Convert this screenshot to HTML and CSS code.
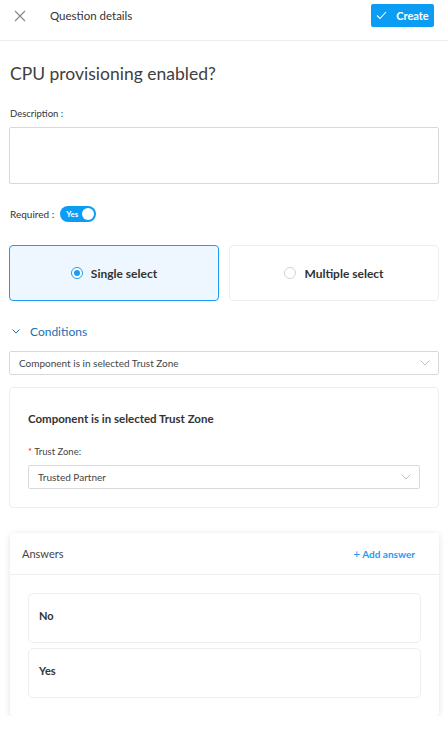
FILE: index.html
```html
<!DOCTYPE html>
<html>
<head>
<meta charset="utf-8">
<link rel="stylesheet" href="styles.css">
</head>
<body>
<header class="topbar">
  <svg class="close" width="12" height="12" viewBox="0 0 12 12"><path d="M1 1L11 11M11 1L1 11" stroke="#888" stroke-width="1.2" fill="none"/></svg>
  <span class="topbar-title">Question details</span>
  <button class="create-btn"><svg width="11" height="9" viewBox="0 0 11 9"><path d="M1 4.5L4 7.5L10 1" stroke="#fff" stroke-width="1.1" fill="none"/></svg><span>Create</span></button>
</header>
<main class="content">
  <h1 class="title">CPU provisioning enabled?</h1>
  <div class="label">Description :</div>
  <div class="textarea"></div>
  <div class="required-row">
    <span class="label-inline">Required :</span>
    <span class="toggle"><span class="toggle-text">Yes</span><span class="knob"></span></span>
  </div>
  <div class="type-row">
    <div class="type-card active"><span class="radio on"></span><span>Single select</span></div>
    <div class="type-card"><span class="radio"></span><span>Multiple select</span></div>
  </div>
  <div class="conditions-head">
    <svg width="8" height="5" viewBox="0 0 8 5"><path d="M0.5 0.5L4 4L7.5 0.5" stroke="#1b6fb3" stroke-width="1" fill="none"/></svg>
    <span>Conditions</span>
  </div>
  <div class="select"><span>Component is in selected Trust Zone</span><svg width="10" height="6" viewBox="0 0 10 6"><path d="M0.5 0.5L5 5L9.5 0.5" stroke="#bbb" stroke-width="0.9" fill="none"/></svg></div>
  <div class="cond-card">
    <div class="cond-title">Component is in selected Trust Zone</div>
    <div class="field-label"><span class="star">*</span> Trust Zone:</div>
    <div class="select inner"><span>Trusted Partner</span><svg width="10" height="6" viewBox="0 0 10 6"><path d="M0.5 0.5L5 5L9.5 0.5" stroke="#bbb" stroke-width="0.9" fill="none"/></svg></div>
  </div>
  <section class="answers">
    <div class="answers-head">
      <span class="answers-title">Answers</span>
      <span class="add"><span class="plus">+</span> Add answer</span>
    </div>
    <div class="answers-body">
      <div class="answer">No</div>
      <div class="answer">Yes</div>
    </div>
  </section>
</main>
</body>
</html>
```
FILE: styles.css
```css
* { box-sizing: border-box; }
body {
  margin: 0;
  background: #fff;
  font-family: Lato, "Noto Sans", sans-serif;
  color: #333;
}
.topbar {
  height: 41px;
  border-bottom: 1px solid #ececec;
  display: flex;
  align-items: flex-start;
  padding: 4px 14px 0 14px;
}
.close { margin-top: 6px; margin-left: 0; }
.topbar-title {
  margin-left: 24px;
  font-size: 11.5px;
  line-height: 23px;
  color: #333;
}
.create-btn {
  margin-left: auto;
  width: 63px;
  height: 23px;
  border: none;
  border-radius: 2px;
  background: #0b9cf4;
  color: #fff;
  font-family: inherit;
  font-weight: 700;
  font-size: 11px;
  display: flex;
  align-items: center;
  justify-content: center;
  gap: 9px;
  padding: 0;
}
.content { padding: 0 9px; }
.title {
  margin: 21px 0 0 1px;
  font-size: 17.5px;
  font-weight: 400;
  line-height: 24px;
  color: #404040;
}
.label {
  margin-top: 21px;
  font-size: 9.5px;
  line-height: 14px;
  color: #333;
  padding-left: 1px;
}
.textarea {
  margin-top: 6px;
  height: 57px;
  border: 1px solid #d9d9d9;
  border-radius: 2px;
}
.required-row {
  margin-top: 22px;
  display: flex;
  align-items: center;
  gap: 6px;
  padding-left: 1px;
}
.label-inline { font-size: 10px; color: #333; }
.toggle {
  position: relative;
  width: 36px;
  height: 16px;
  border-radius: 8px;
  background: #0b9cf4;
  display: inline-block;
}
.toggle-text {
  position: absolute;
  left: 6px;
  top: 2px;
  font-size: 8px;
  line-height: 12px;
  color: #fff;
  font-weight: 700;
}
.knob {
  position: absolute;
  right: 2px;
  top: 2px;
  width: 12px;
  height: 12px;
  border-radius: 50%;
  background: #fff;
}
.type-row {
  margin-top: 23px;
  display: grid;
  grid-template-columns: 1fr 1fr;
  gap: 10px;
}
.type-card {
  height: 56px;
  border: 1px solid #eeeeee;
  border-radius: 4px;
  display: flex;
  align-items: center;
  justify-content: center;
  gap: 8px;
  font-size: 12px;
  font-weight: 700;
  color: #333;
}
.type-card.active {
  border-color: #1b9df2;
  background: #eef7ff;
}
.radio {
  width: 12px;
  height: 12px;
  border-radius: 50%;
  border: 1px solid #d3d3d3;
  background: #fff;
  position: relative;
}
.radio.on { border-color: #1b9df2; }
.radio.on::after {
  content: "";
  position: absolute;
  left: 2px;
  top: 2px;
  width: 6px;
  height: 6px;
  border-radius: 50%;
  background: #1b9df2;
}
.conditions-head {
  margin-top: 23px;
  display: flex;
  align-items: center;
  gap: 10px;
  padding-left: 3px;
  color: #1b6fb3;
  font-size: 12px;
}
.select {
  margin-top: 12px;
  height: 24px;
  border: 1px solid #d9d9d9;
  border-radius: 2px;
  display: flex;
  align-items: center;
  justify-content: space-between;
  padding: 0 8px 0 9px;
  font-size: 10px;
  color: #444;
}
.cond-card {
  margin-top: 12px;
  border: 1px solid #eeeeee;
  border-radius: 4px;
  padding: 24px 18px 18px 18px;
}
.cond-title {
  font-size: 11.5px;
  font-weight: 700;
  line-height: 14px;
  color: #333;
}
.field-label {
  margin-top: 20px;
  font-size: 9.5px;
  line-height: 12px;
  color: #444;
}
.star { color: #f5222d; }
.select.inner { margin-top: 7px; }
.answers {
  margin: 25px 0 0 1px;
  border-radius: 4px;
  background: #fff;
  box-shadow: 0 1px 6px rgba(0,0,0,0.12);
}
.answers-head {
  height: 42px;
  border-bottom: 1px solid #eeeeee;
  display: flex;
  align-items: center;
  justify-content: space-between;
  padding: 0 24px 0 12px;
}
.answers-title { font-size: 11px; color: #444; }
.add { font-size: 10px; font-weight: 700; color: #1b9df2; }
.plus { font-weight: 400; font-size: 12px; }
.answers-body {
  padding: 18px 18px 18px 18px;
  display: flex;
  flex-direction: column;
  gap: 5px;
}
.answer {
  height: 50px;
  border: 1px solid #eeeeee;
  border-radius: 5px;
  padding: 15px 10px 0 10px;
  font-size: 11px;
  font-weight: 700;
  color: #333;
}
```
